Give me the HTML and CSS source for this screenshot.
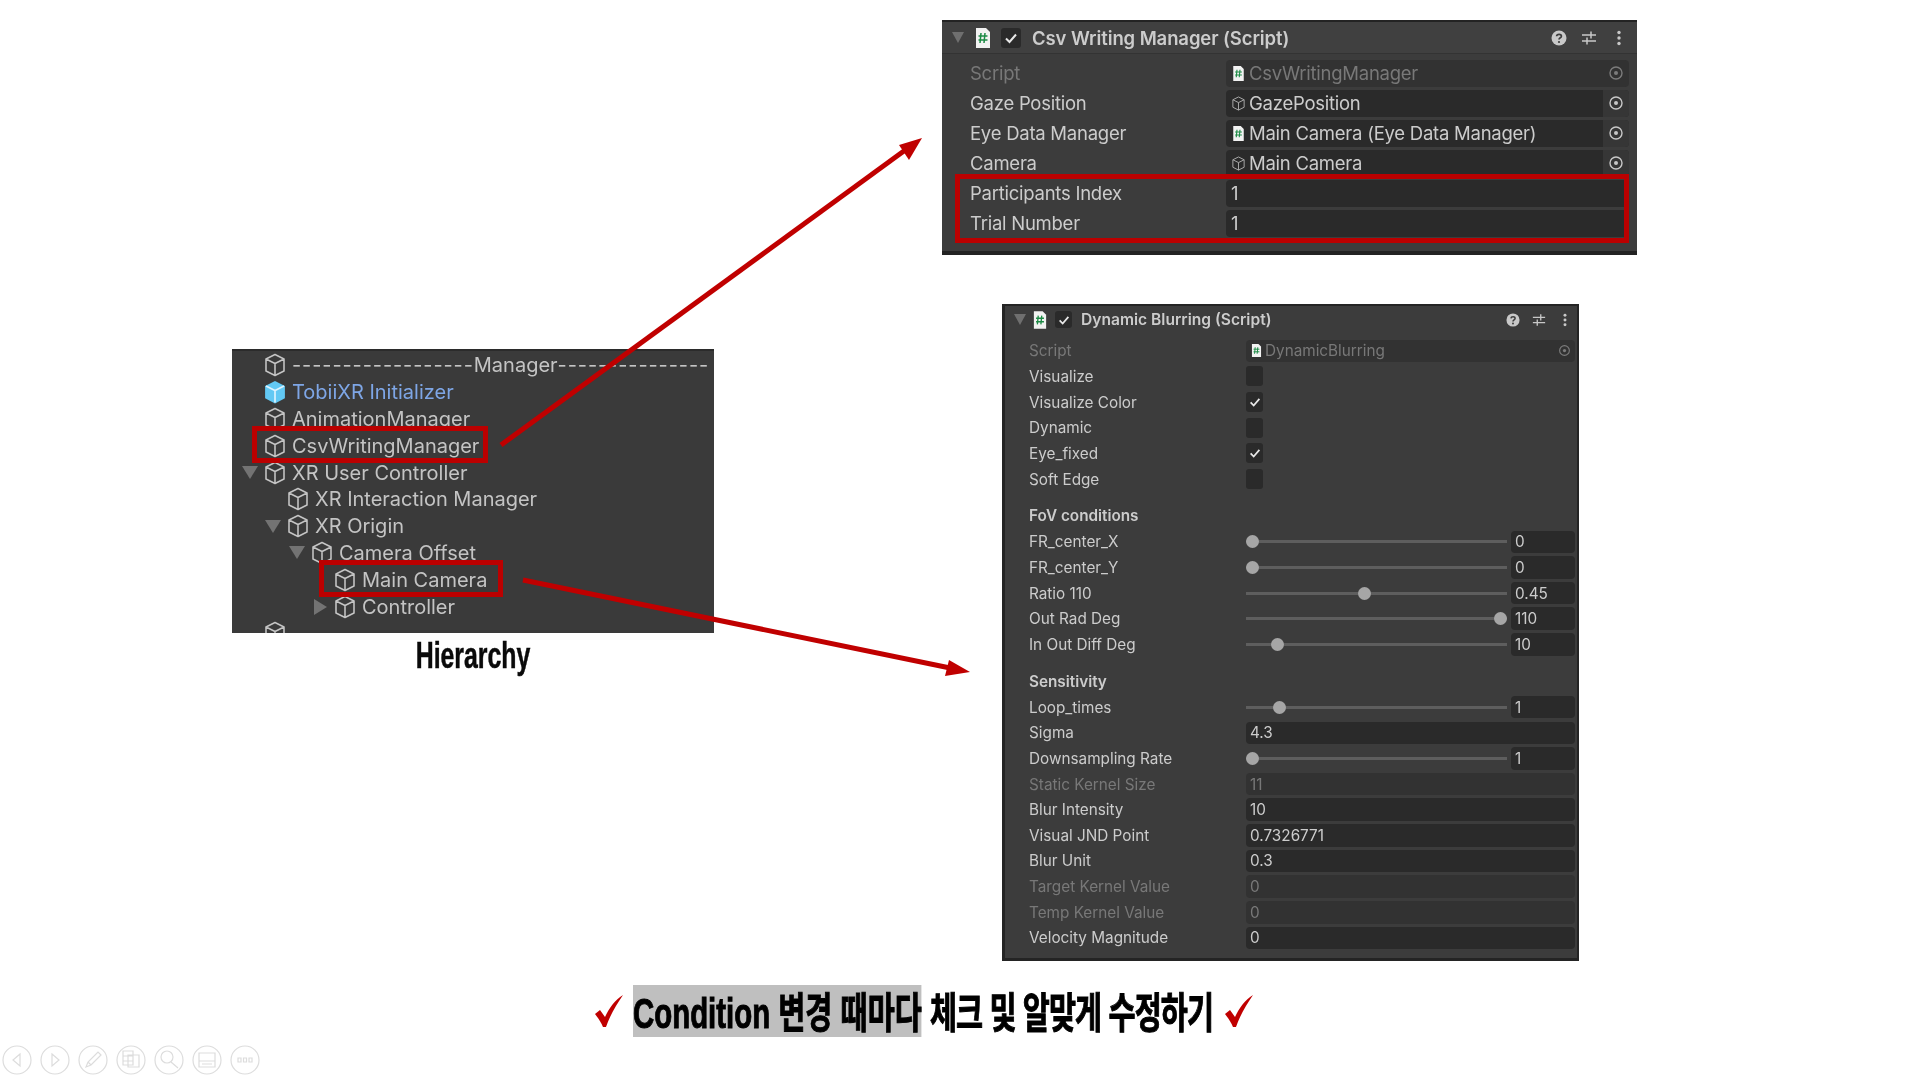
FILE: index.html
```html
<!DOCTYPE html>
<html lang="ko">
    <head>
        <meta charset="UTF-8" />
        <meta name="viewport" content="width=device-width, initial-scale=1.0" />
        <title>Condition check</title>
        <link rel="stylesheet" href="styles.css">
    </head>
    <body>
        <svg class="defs" width="0" height="0">
            <symbol id="cube" viewBox="0 0 16 16">
                <path d="M8 1 14 4v8l-6 3-6-3V4zM2 4l6 3 6-3M8 7v8" fill="none" stroke="currentColor" stroke-width="1.05" stroke-linejoin="round" />
            </symbol>
            <symbol id="cube-blue" viewBox="0 0 16 16">
                <path d="M8 .6 14.6 4v8.2L8 15.6 1.4 12.2V4z" fill="#62c9f4" />
                <path d="M2 4l6 3 6-3M8 7v8" fill="none" stroke="#dff4ff" stroke-width="1.1" />
            </symbol>
            <symbol id="page" viewBox="0 0 16 20">
                <path d="M1 0h10l4 4v16H1z" fill="#f2f2f2" />
                <path d="M6 5 5 15M10 5 9 15M3.5 8h9M3.5 12h9" stroke="#1d8a45" stroke-width="1.5" fill="none" />
            </symbol>
            <symbol id="target" viewBox="0 0 16 16">
                <circle cx="8" cy="8" r="6" fill="none" stroke="currentColor" stroke-width="1.4" />
                <circle cx="8" cy="8" r="2" fill="currentColor" />
            </symbol>
            <symbol id="tick" viewBox="0 0 16 16">
                <path d="M3 8.5 6.5 12 13 4.5" fill="none" stroke="currentColor" stroke-width="2" />
            </symbol>
            <symbol id="help" viewBox="0 0 16 16">
                <circle cx="8" cy="8" r="7.5" fill="#c8c8c8" />
                <path d="M5.6 6.2C5.8 3.8 10.4 3.8 10.4 6.2 10.4 7.8 8 7.8 8 9.6" fill="none" stroke="#3c3c3c" stroke-width="1.7" />
                <circle cx="8" cy="12" r="1.1" fill="#3c3c3c" />
            </symbol>
            <symbol id="tune" viewBox="0 0 16 16">
                <path d="M1 5h14M1 11h14M10 1.5v7M6 7.5v7" stroke="#c8c8c8" stroke-width="1.5" fill="none" />
            </symbol>
            <symbol id="dots" viewBox="0 0 16 16">
                <circle cx="8" cy="2.5" r="1.7" fill="#c8c8c8" />
                <circle cx="8" cy="8" r="1.7" fill="#c8c8c8" />
                <circle cx="8" cy="13.5" r="1.7" fill="#c8c8c8" />
            </symbol>
        </svg>

        <!-- hierarchy screenshot -->
        <div class="hierarchy">
            <div class="tree-row d0"><svg class="cube"><use href="#cube" /></svg><span><span class="dashes">------------------</span>Manager<span class="dashes">---------------</span></span></div>
            <div class="tree-row d0 blue"><svg class="cube"><use href="#cube-blue" /></svg>TobiiXR Initializer</div>
            <div class="tree-row d0"><svg class="cube"><use href="#cube" /></svg>AnimationManager</div>
            <div class="tree-row d0"><svg class="cube"><use href="#cube" /></svg>CsvWritingManager</div>
            <div class="tree-row d0"><i class="fold"></i><svg class="cube"><use href="#cube" /></svg>XR User Controller</div>
            <div class="tree-row d1"><svg class="cube"><use href="#cube" /></svg>XR Interaction Manager</div>
            <div class="tree-row d1"><i class="fold"></i><svg class="cube"><use href="#cube" /></svg>XR Origin</div>
            <div class="tree-row d2"><i class="fold"></i><svg class="cube"><use href="#cube" /></svg>Camera Offset</div>
            <div class="tree-row d3"><svg class="cube"><use href="#cube" /></svg>Main Camera</div>
            <div class="tree-row d3"><i class="fold closed"></i><svg class="cube"><use href="#cube" /></svg>Controller</div>
            <div class="tree-row d0"><svg class="cube"><use href="#cube" /></svg></div>
            <div class="mark mark-csv"></div>
            <div class="mark mark-camera"></div>
        </div>
        <div class="hierarchy-title">Hierarchy</div>

        <!-- csv manager -->
        <div class="panel panel-csv">
            <div class="panel-head">
                <i class="fold"></i>
                <svg class="script-icon"><use href="#page" /></svg>
                <span class="check"><svg><use href="#tick" /></svg></span>
                <span class="panel-title">Csv Writing Manager (Script)</span>
                <svg class="head-icon"><use href="#help" /></svg>
                <svg class="head-icon"><use href="#tune" /></svg>
                <svg class="head-icon"><use href="#dots" /></svg>
            </div>
            <div class="row off"><label>Script</label><div class="field ref"><svg class="ref-icon"><use href="#page" /></svg>CsvWritingManager<span class="pick"><svg><use href="#target" /></svg></span></div></div>
            <div class="row"><label>Gaze Position</label><div class="field ref"><svg class="ref-icon"><use href="#cube" /></svg>GazePosition<span class="pick"><svg><use href="#target" /></svg></span></div></div>
            <div class="row"><label>Eye Data Manager</label><div class="field ref"><svg class="ref-icon"><use href="#page" /></svg>Main Camera (Eye Data Manager)<span class="pick"><svg><use href="#target" /></svg></span></div></div>
            <div class="row"><label>Camera</label><div class="field ref"><svg class="ref-icon"><use href="#cube" /></svg>Main Camera<span class="pick"><svg><use href="#target" /></svg></span></div></div>
            <div class="row"><label>Participants Index</label><div class="field">1</div></div>
            <div class="row"><label>Trial Number</label><div class="field">1</div></div>
            <div class="mark mark-index"></div>
        </div>

        <!-- blurring component -->
        <div class="panel panel-blur">
            <div class="panel-head">
                <i class="fold"></i>
                <svg class="script-icon"><use href="#page" /></svg>
                <span class="check"><svg><use href="#tick" /></svg></span>
                <span class="panel-title">Dynamic Blurring (Script)</span>
                <svg class="head-icon"><use href="#help" /></svg>
                <svg class="head-icon"><use href="#tune" /></svg>
                <svg class="head-icon"><use href="#dots" /></svg>
            </div>
            <div class="row off"><label>Script</label><div class="field ref"><svg class="ref-icon"><use href="#page" /></svg>DynamicBlurring<span class="pick"><svg><use href="#target" /></svg></span></div></div>
            <div class="row"><label>Visualize</label><span class="check"></span></div>
            <div class="row"><label>Visualize Color</label><span class="check"><svg><use href="#tick" /></svg></span></div>
            <div class="row"><label>Dynamic</label><span class="check"></span></div>
            <div class="row"><label>Eye_fixed</label><span class="check"><svg><use href="#tick" /></svg></span></div>
            <div class="row"><label>Soft Edge</label><span class="check"></span></div>

            <div class="section">FoV conditions</div>
            <div class="row"><label>FR_center_X</label><div class="slider"><div class="rail"><i class="thumb" style="left: 0%"></i></div><div class="field num">0</div></div></div>
            <div class="row"><label>FR_center_Y</label><div class="slider"><div class="rail"><i class="thumb" style="left: 0%"></i></div><div class="field num">0</div></div></div>
            <div class="row"><label>Ratio 110</label><div class="slider"><div class="rail"><i class="thumb" style="left: 45%"></i></div><div class="field num">0.45</div></div></div>
            <div class="row"><label>Out Rad Deg</label><div class="slider"><div class="rail"><i class="thumb" style="left: 100%"></i></div><div class="field num">110</div></div></div>
            <div class="row"><label>In Out Diff Deg</label><div class="slider"><div class="rail"><i class="thumb" style="left: 10%"></i></div><div class="field num">10</div></div></div>

            <div class="section">Sensitivity</div>
            <div class="row"><label>Loop_times</label><div class="slider"><div class="rail"><i class="thumb" style="left: 11%"></i></div><div class="field num">1</div></div></div>
            <div class="row"><label>Sigma</label><div class="field">4.3</div></div>
            <div class="row"><label>Downsampling Rate</label><div class="slider"><div class="rail"><i class="thumb" style="left: 0%"></i></div><div class="field num">1</div></div></div>
            <div class="row off"><label>Static Kernel Size</label><div class="field">11</div></div>
            <div class="row"><label>Blur Intensity</label><div class="field">10</div></div>
            <div class="row"><label>Visual JND Point</label><div class="field">0.7326771</div></div>
            <div class="row"><label>Blur Unit</label><div class="field">0.3</div></div>
            <div class="row off"><label>Target Kernel Value</label><div class="field">0</div></div>
            <div class="row off"><label>Temp Kernel Value</label><div class="field">0</div></div>
            <div class="row"><label>Velocity Magnitude</label><div class="field">0</div></div>
        </div>

        <!-- arrows between the screenshots -->
        <svg class="arrows" viewBox="0 0 1916 1080">
            <path d="M501 445 908 148" stroke="#c00000" stroke-width="5" fill="none" />
            <path d="M922 138 899 145 909 160z" fill="#c00000" />
            <path d="M523 580 955 669" stroke="#c00000" stroke-width="5" fill="none" />
            <path d="M970 672 949 660 945 676z" fill="#c00000" />
        </svg>

        <div class="caption">
            <svg class="red-tick" viewBox="0 0 28 32"><path d="M0 19 5 15 10 22C14 13 20 5 28 0 22 9 15 20 11 32H8C6 27 3 23 0 19z" /></svg>
            <div class="caption-text"><span class="hl">Condition 변경 때마다</span> <span class="tight">체크 및 알맞게 수정하기</span></div>
            <svg class="red-tick tick-end" viewBox="0 0 28 32"><path d="M0 19 5 15 10 22C14 13 20 5 28 0 22 9 15 20 11 32H8C6 27 3 23 0 19z" /></svg>
        </div>

        <!-- slideshow controls -->
        <div class="slide-tools">
            <svg class="tool" viewBox="0 0 30 30"><circle cx="15" cy="15" r="14" /><path d="M18 9 11 15 18 21z" /></svg>
            <svg class="tool" viewBox="0 0 30 30"><circle cx="15" cy="15" r="14" /><path d="M12 9 19 15 12 21z" /></svg>
            <svg class="tool" viewBox="0 0 30 30"><circle cx="15" cy="15" r="14" /><path d="M8 22 10 17 20 7 23 10 13 20zM10 17 13 20" /></svg>
            <svg class="tool" viewBox="0 0 30 30"><circle cx="15" cy="15" r="14" /><path d="M7 6h10v14H7zM7 11h10M7 16h10M12 10h11v12H12z" /></svg>
            <svg class="tool" viewBox="0 0 30 30"><circle cx="15" cy="15" r="14" /><circle cx="13" cy="12" r="6" /><path d="M17 17 24 23" /></svg>
            <svg class="tool" viewBox="0 0 30 30"><circle cx="15" cy="15" r="14" /><path d="M7 8h16v14H7zM7 16h16M10 19h10" /></svg>
            <svg class="tool" viewBox="0 0 30 30"><circle cx="15" cy="15" r="14" /><path d="M8 13h3v4H8zM13.5 13h3v4h-3zM19 13h3v4h-3z" /></svg>
        </div>
    </body>
</html>
```

FILE: styles.css
```css
* {
    box-sizing: border-box;
}
html, body {
    margin: 0;
    height: 100%;
}
body {
    position: relative;
    overflow: hidden;
    background-color: #ffffff;
    font-family: Inter, "Noto Sans", sans-serif;
    color: #cccccc;
}
.defs {
    position: absolute;
}
i {
    display: block;
}

/* hierarchy */
.hierarchy {
    position: absolute;
    left: 232px;
    top: 349px;
    width: 482px;
    height: 284px;
    overflow: hidden;
    padding-top: 1px;
    background-color: #3a3a3a;
    border-top: 2px solid #2b2b2b;
    font-size: 20px;
    color: #c4c4c4;
    filter: blur(0.6px);
}
.tree-row {
    position: relative;
    display: flex;
    align-items: center;
    column-gap: 5.5px;
    height: 26.8px;
    white-space: nowrap;
}
.tree-row .fold {
    position: absolute;
    margin-left: -21px;
    border-top: 13px solid #737373;
    border-left: 8px solid transparent;
    border-right: 8px solid transparent;
}
.tree-row .fold.closed {
    margin-left: -19px;
    border-left: 13px solid #737373;
    border-top: 8px solid transparent;
    border-bottom: 8px solid transparent;
    border-right: none;
}
.d0 { padding-left: 30.5px; }
.d1 { padding-left: 53.5px; }
.d2 { padding-left: 77.5px; }
.d3 { padding-left: 100.5px; }
.blue {
    color: #7ea6e6;
}
.cube {
    flex: none;
    width: 24px;
    height: 24px;
}
.dashes {
    letter-spacing: 0.9px;
}
.mark {
    position: absolute;
    border: 5px solid #bb0000;
}
.mark-csv {
    left: 20px;
    top: 75px;
    width: 236px;
    height: 37px;
}
.mark-camera {
    left: 87px;
    top: 209px;
    width: 184px;
    height: 37px;
}
.hierarchy-title {
    position: absolute;
    left: 373px;
    top: 636px;
    width: 200px;
    text-align: center;
    font-family: "Liberation Sans", sans-serif;
    font-weight: 700;
    font-size: 36px;
    line-height: 40px;
    color: #0a0a0a;
    -webkit-text-stroke: 0.5px #0a0a0a;
    transform: scaleX(0.69);
}

/* inspector panels */
.panel {
    position: absolute;
    background-color: #3c3c3c;
    filter: blur(0.6px);
}
.panel-head {
    display: flex;
    align-items: center;
}
.panel-head .fold {
    border-top: 11px solid #6f6f6f;
    border-left: 6px solid transparent;
    border-right: 6px solid transparent;
}
.panel-title {
    flex: 1;
    font-weight: 600;
    white-space: nowrap;
}
.row {
    display: grid;
    align-items: center;
}
.row label {
    white-space: nowrap;
}
.row.off label, .row.off .field {
    color: #787878;
}
.row.off .field {
    background-color: #323232;
}
.field {
    position: relative;
    display: flex;
    align-items: center;
    background-color: #2a2a2a;
    border-radius: 4px;
    white-space: nowrap;
}
.ref-icon {
    flex: none;
    color: #a8a8a8;
}
.pick {
    position: absolute;
    right: 0;
    top: 0;
    bottom: 0;
    display: flex;
    align-items: center;
    justify-content: center;
    background-color: #363636;
    border-radius: 0 4px 4px 0;
    color: #c8c8c8;
}
.row.off .pick {
    background-color: transparent;
    color: #7c7c7c;
}
.pick svg {
    width: 16px;
    height: 16px;
}
.check {
    display: flex;
    align-items: center;
    justify-content: center;
    background-color: #2a2a2a;
    border-radius: 3px;
    color: #e8e8e8;
}

.panel-csv {
    left: 942px;
    top: 20px;
    width: 695px;
    height: 235px;
    padding-bottom: 12px;
    font-size: 18.5px;
    letter-spacing: -0.25px;
    border-top: 2px solid #232323;
    border-bottom: 4px solid #232323;
}
.panel-csv .panel-head {
    height: 32px;
    margin-bottom: 4px;
    padding: 0 10px;
    background-color: #404040;
    border-bottom: 1px solid #333333;
}
.panel-csv .script-icon {
    width: 16px;
    height: 20px;
    margin-left: 11px;
}
.panel-csv .check {
    width: 20px;
    height: 20px;
    margin: 0 11px 0 10px;
}
.panel-csv .check svg {
    width: 16px;
    height: 16px;
}
.panel-csv .panel-title {
    font-size: 18.5px;
    letter-spacing: -0.1px;
}
.panel-csv .head-icon {
    width: 16px;
    height: 16px;
    margin-left: 14px;
}
.panel-csv .row {
    grid-template-columns: 256px 1fr;
    height: 30px;
    padding: 0 8px 0 28px;
}
.panel-csv .field {
    height: 27px;
    padding-left: 5px;
}
.panel-csv .ref-icon {
    width: 15px;
    height: 15px;
    margin-right: 3px;
}
.panel-csv .pick {
    width: 26px;
}
.mark-index {
    left: 13px;
    top: 152px;
    width: 674px;
    height: 69px;
}

.panel-blur {
    left: 1002px;
    top: 304px;
    width: 577px;
    height: 657px;
    font-size: 15.3px;
    border: solid #242424;
    border-width: 2px 2px 3px 3px;
}
.panel-blur .panel-head {
    height: 27px;
    margin-bottom: 5px;
    padding: 0 5px 0 9px;
}
.panel-blur .script-icon {
    width: 14px;
    height: 18px;
    margin-left: 7px;
}
.panel-blur .panel-head .check {
    width: 17px;
    height: 17px;
    margin: 0 9px 0 8px;
}
.panel-blur .check svg {
    width: 14px;
    height: 14px;
}
.panel-blur .panel-title {
    font-size: 15.6px;
}
.panel-blur .head-icon {
    width: 14px;
    height: 14px;
    margin-left: 12px;
}
.panel-blur .row {
    grid-template-columns: 217px 1fr;
    height: 25.65px;
    padding: 0 2px 0 24px;
}
.panel-blur .field {
    height: 22.5px;
    padding-left: 4px;
}
.panel-blur .row > .check {
    width: 17px;
    height: 20px;
}
.panel-blur .ref-icon {
    width: 13px;
    height: 13px;
    margin-right: 2px;
}
.panel-blur .pick {
    width: 22px;
}
.panel-blur .pick svg {
    width: 13px;
    height: 13px;
}
.section {
    margin-top: 11.5px;
    height: 25.65px;
    padding-left: 24px;
    line-height: 25.65px;
    font-weight: 600;
}
.slider {
    display: flex;
    align-items: center;
    column-gap: 4px;
}
.rail {
    position: relative;
    flex: 1;
    height: 3px;
    margin-right: 13px;
    background: #5e5e5e;
    box-shadow: 13px 0 0 #5e5e5e;
}
.thumb {
    position: absolute;
    top: -5px;
    width: 13px;
    height: 13px;
    border-radius: 50%;
    background-color: #a6a6a6;
}
.field.num {
    flex: none;
    width: 64px;
}

/* overlay arrows */
.arrows {
    position: absolute;
    left: 0;
    top: 0;
    width: 1916px;
    height: 1080px;
    pointer-events: none;
}

/* bottom caption */
.caption {
    position: absolute;
    left: 595px;
    top: 985px;
    display: flex;
    align-items: center;
    height: 52px;
}
.red-tick {
    flex: none;
    width: 28px;
    height: 32px;
    margin-right: 10px;
    fill: #c00000;
}
.tick-end {
    position: absolute;
    left: 630px;
    margin: 0;
}
.caption-text {
    width: 579px;
    white-space: nowrap;
    font-family: "Liberation Sans", "Noto Sans CJK KR", sans-serif;
    font-weight: 700;
    font-size: 42px;
    line-height: 46px;
    color: #000000;
    -webkit-text-stroke: 1px #000000;
    transform: scaleX(0.7);
    transform-origin: left center;
}
.hl {
    display: inline-block;
    padding-top: 6px;
    background-color: #bfbfbf;
}
.tight {
    letter-spacing: -1.3px;
}

.slide-tools {
    position: absolute;
    left: 2px;
    top: 1045px;
    display: flex;
    column-gap: 8px;
    opacity: 0.8;
}
.tool {
    width: 30px;
    height: 30px;
    fill: none;
    stroke: #d4d4d4;
    stroke-width: 1.2;
}
```
